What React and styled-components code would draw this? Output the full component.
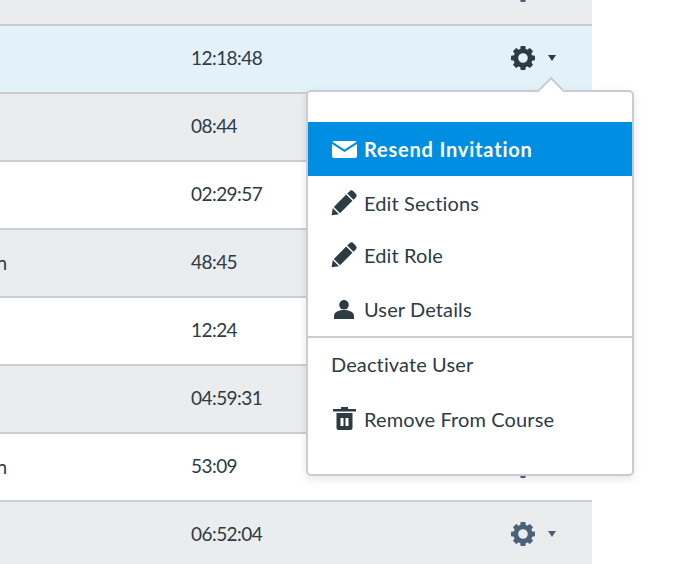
import React from "react";
import styled, { createGlobalStyle } from "styled-components";

const GlobalStyle = createGlobalStyle`
  html, body {
    margin: 0;
    height: 100%;
    overflow: hidden;
    background: #fff;
  }
  body {
    font-family: Lato, "Noto Sans", sans-serif;
    color: #2d3b45;
  }
`;

const Page = styled.div`
  position: relative;
  width: 686px;
  height: 564px;
  overflow: hidden;
`;

const Table = styled.div`
  width: 592px;
  margin-top: -42px;
`;

const Row = styled.div`
  display: grid;
  grid-template-columns: 7px 184px 1fr 81px;
  align-items: center;
  height: 66px;
  border-bottom: 2px solid #c7cdd1;
  background: ${(p) => (p.$active ? "#e3f1f8" : p.$striped ? "#ebeced" : "#fff")};
`;

const Name = styled.div`
  display: flex;
  justify-content: flex-end;
  margin-top: -2px;
  font-size: 19px;
`;

const Time = styled.div`
  grid-column: 3;
  margin-top: -3px;
  font-size: 19px;
  letter-spacing: -0.55px;
`;

const Actions = styled.div`
  grid-column: 4;
  display: flex;
  align-items: center;
  gap: 13px;
  margin-top: -2px;
  color: ${(p) => (p.$active ? "#2d3b45" : "#4a6177")};
`;

const Caret = styled.span`
  width: 0;
  height: 0;
  border-left: 4px solid transparent;
  border-right: 4px solid transparent;
  border-top: 6px solid currentColor;
`;

const Menu = styled.div`
  position: absolute;
  left: 306px;
  top: 90px;
  box-sizing: border-box;
  width: 328px;
  height: 386px;
  padding-top: 30px;
  background: #fff;
  border: 2px solid #c7cdd1;
  border-radius: 5px;
  box-shadow: 0 3px 8px rgba(0, 0, 0, 0.1);

  &::before {
    content: "";
    position: absolute;
    left: 233px;
    top: -11px;
    width: 20px;
    height: 20px;
    box-sizing: border-box;
    background: #fff;
    border-left: 2px solid #c7cdd1;
    border-top: 2px solid #c7cdd1;
    transform: rotate(45deg);
  }
`;

const Item = styled.div`
  display: flex;
  align-items: center;
  box-sizing: border-box;
  height: ${(p) => p.$h}px;
  padding: 0 0 ${(p) => p.$lift || 0}px 23px;
  font-size: 20px;
  font-weight: ${(p) => (p.$selected ? 700 : 400)};
  letter-spacing: ${(p) => (p.$selected ? "0.8px" : "0.12px")};
  color: ${(p) => (p.$selected ? "#fff" : "#2d3b45")};
  background: ${(p) => (p.$selected ? "#008ee2" : "transparent")};
`;

const IconSlot = styled.span`
  display: flex;
  justify-content: center;
  width: 26px;
  margin-right: 7px;
`;

const Divider = styled.div`
  height: 2px;
  background: #c7cdd1;
`;

const GearIcon = () => (
  <svg width="24" height="24" viewBox="0 0 24 24" fill="currentColor">
    <circle cx="12" cy="12" r="7.2" fill="none" stroke="currentColor" strokeWidth="4.8" />
    {[0, 45, 90, 135, 180, 225, 270, 315].map((deg) => (
      <rect key={deg} x="9.4" y="0" width="5.2" height="5" rx="1" transform={`rotate(${deg} 12 12)`} />
    ))}
  </svg>
);

const MailIcon = () => (
  <svg width="25" height="17" viewBox="0 0 25 17" fill="currentColor">
    <path d="M2 0h21a2 2 0 0 1 1.6.8L12.5 8.6.4.8A2 2 0 0 1 2 0z" />
    <path d="M0 3l12.5 8L25 3v12a2 2 0 0 1-2 2H2a2 2 0 0 1-2-2z" />
  </svg>
);

const PencilIcon = () => (
  <svg width="26" height="26" viewBox="0 0 26 26" fill="currentColor">
    <g transform="rotate(-45 13 13)">
      <path d="M-4.5 13L1.5 8.6V17.4z" />
      <rect x="3" y="8.6" width="17.5" height="8.8" />
      <path d="M22 8.6h3a3 3 0 0 1 3 3v2.8a3 3 0 0 1-3 3h-3z" />
    </g>
  </svg>
);

const UserIcon = () => (
  <svg width="20" height="19" viewBox="0 0 20 19" fill="currentColor">
    <circle cx="10" cy="4.8" r="4.8" />
    <path d="M0 19v-3c0-3.5 4-6 10-6s10 2.5 10 6v3z" />
  </svg>
);

const TrashIcon = () => (
  <svg width="23" height="23" viewBox="0 0 23 23" fill="currentColor">
    <path d="M8 0h7v2h8v2.4H0V2h8z" />
    <path
      fillRule="evenodd"
      d="M3.5 6h16v15a2 2 0 0 1-2 2h-12a2 2 0 0 1-2-2zM7.5 11v8h3v-8zm5 0v8h3v-8z"
    />
  </svg>
);

const rows = [
  { time: "" },
  { time: "12:18:48", active: true },
  { time: "08:44", striped: true },
  { time: "02:29:57" },
  { time: "48:45", striped: true, name: "n" },
  { time: "12:24" },
  { time: "04:59:31", striped: true },
  { time: "53:09", name: "n" },
  { time: "06:52:04", striped: true },
];

export default function App() {
  return (
    <Page>
      <GlobalStyle />
      <Table>
        {rows.map((r, i) => (
          <Row key={i} $active={r.active} $striped={r.striped || i === 0}>
            <Name>{r.name}</Name>
            <Time>{r.time}</Time>
            <Actions $active={r.active}>
              <GearIcon />
              <Caret />
            </Actions>
          </Row>
        ))}
      </Table>
      <Menu>
        <Item $selected $h={54}>
          <IconSlot><MailIcon /></IconSlot>
          Resend Invitation
        </Item>
        <Item $h={55} $lift={2}><IconSlot><PencilIcon /></IconSlot>Edit Sections</Item>
        <Item $h={51} $lift={4}><IconSlot><PencilIcon /></IconSlot>Edit Role</Item>
        <Item $h={54}><IconSlot><UserIcon /></IconSlot>User Details</Item>
        <Divider />
        <Item $h={55} $lift={4}>Deactivate User</Item>
        <Item $h={55} $lift={4}><IconSlot><TrashIcon /></IconSlot>Remove From Course</Item>
      </Menu>
    </Page>
  );
}
